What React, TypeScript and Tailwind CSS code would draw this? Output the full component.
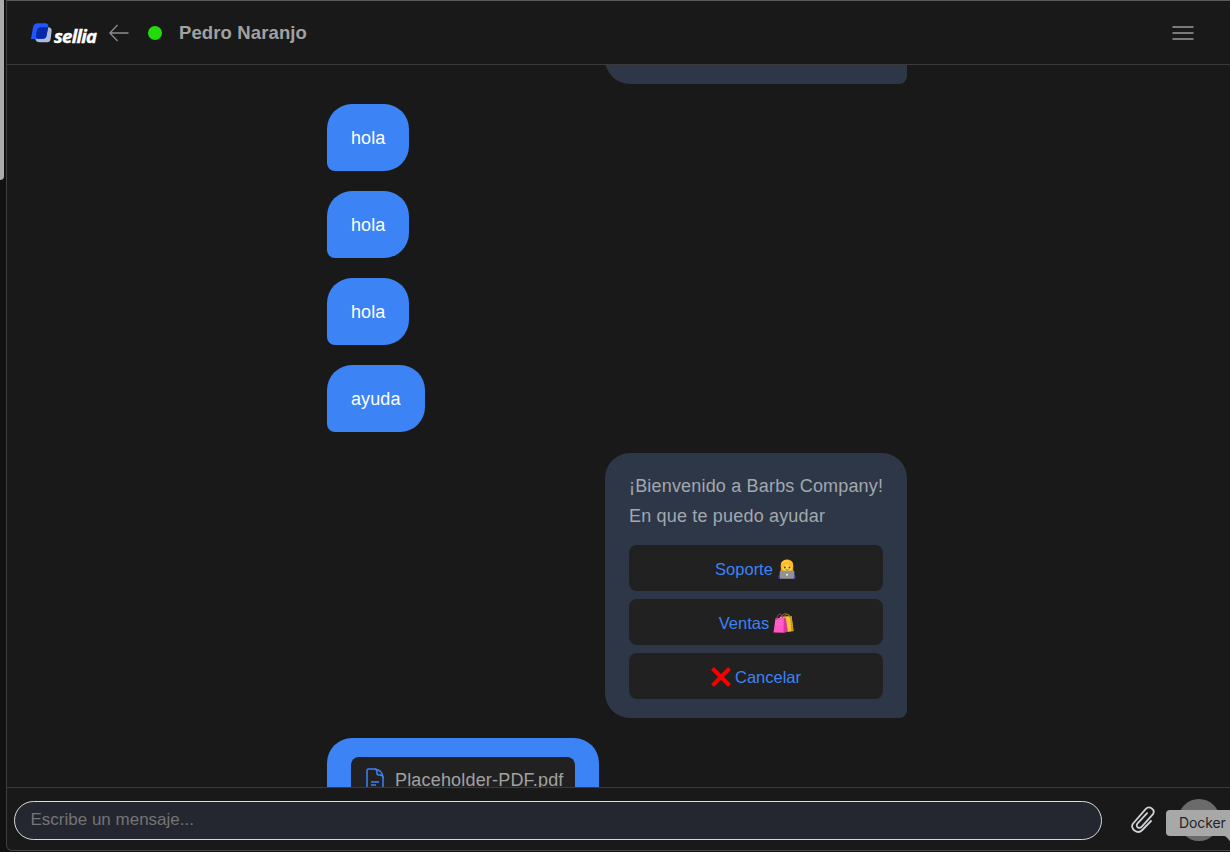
import type { ReactNode } from "react";

function Logo() {
  return (
    <div className="flex h-[24px] w-[68px] shrink-0 items-center">
      <svg width="22" height="22" viewBox="0 0 22 22" className="mt-[2px] shrink-0">
        <path d="M9 4.300h8q4 0 3.600 4l-1 8q-.5 3-3.500 3H9q-4 0-4.800-3.500l1.500-8Q6.200 4.300 9 4.300z" fill="#b1bad4" />
        <path d="M6.800.3h7.500q3.500 0 2.900 3.500l-1.800 9.200q-.5 3-4 3H0L2 4.500Q2.800.3 6.800.3z" fill="#2157ff" />
        <path d="M10 4.200h7.200l-1.700 8.800q-.5 2.800-4 2.800H8q-3.500 0-3-3.500l.7-4.300Q6.500 4.200 10 4.200z" fill="#0527a8" />
      </svg>
      <span className="mt-[7px] ml-[1px] font-['Open_Sans',sans-serif] text-[18.500px] leading-none font-bold tracking-[-0.7px] text-white italic [-webkit-text-stroke:0.4px_white]">
        sellia
      </span>
    </div>
  );
}

function SupportEmoji() {
  return (
    <svg width="18" height="20" viewBox="0 0 18 20" className="mx-px shrink-0">
      <path d="M2.800 14V7.500C2.300 3 5 .8 9 .8s6.700 2.200 6.200 6.700V14z" fill="#f0a51b" />
      <path d="M0 19.500q.2-5 3.500-5.500h11q3.200.5 3.500 5.500z" fill="#3433bb" />
      <ellipse cx="9.200" cy="8" rx="5" ry="5" fill="#ffd84a" />
      <path d="M3 9.500c2.500-.8 4.300-2.500 5-5.300C9.500 6.500 12.500 7.500 15.200 8.500 15.500 3 13 .8 9 .8S2.500 3 3 9.500z" fill="#ffb929" />
      <path d="M4.500 3.800Q7 1.300 10 2.300" stroke="#ffe17a" strokeWidth=".9" fill="none" />
      <circle cx="6.900" cy="8.500" r=".9" fill="#5c3c18" />
      <circle cx="11.500" cy="8.500" r=".9" fill="#5c3c18" />
      <path d="M7.500 10.500q1.700 1.100 3.400 0" stroke="#b84b22" strokeWidth=".8" fill="none" />
      <rect x="1.800" y="11.700" width="14.500" height="8" rx=".8" fill="#929292" />
      <circle cx="9" cy="15.800" r="1" fill="#f2f2f2" />
    </svg>
  );
}

function BagsEmoji() {
  return (
    <svg width="21" height="20" viewBox="0 0 21 20" className="-mr-px shrink-0">
      <path d="M6.500 3.800 18.500 3 20.500 18l-6 1z" fill="#f3c52f" />
      <path d="M17 3.200l1.500-.2 2 15-2.200.3z" fill="#c99513" />
      <path d="M9 4.500C9-.5 15.500-.5 16.500 4.500M11.500 4c.5-3.500 5-3.500 6 0" stroke="#a17829" fill="none" strokeWidth="1" />
      <path d="M2.500 5.200 11 4.700 11.500 19.700.5 19.500z" fill="#ff58c4" />
      <path d="M11 4.700l1.700-.2L15 18.700l-4.500 1 .2-8z" fill="#d9369e" />
      <path d="M3.800 7C4-.5 9-.5 9.800 5" stroke="#a44880" fill="none" strokeWidth="1" />
      <path d="M2 8h8M1.500 11h8M15 7h4M15.500 10h4M16 13h4" stroke="#ffffff" strokeOpacity=".2" strokeWidth=".7" />
    </svg>
  );
}

function CrossEmoji() {
  return (
    <svg width="20" height="20" viewBox="0 0 20 20" className="shrink-0">
      <path d="M1.500 1.500 18.500 18.500M18.500 1.500 1.500 18.500" stroke="#f60000" strokeWidth="4" />
    </svg>
  );
}

function UserBubble({ children }: { children: ReactNode }) {
  return (
    <div className="flex h-[67px] items-center self-start rounded-[25px] rounded-bl-[8px] bg-[#3c83f6] px-6 pt-[2px] text-[18px] tracking-[0.1px] text-white">
      {children}
    </div>
  );
}

function Option({ children }: { children: ReactNode }) {
  return (
    <button className="flex h-[46px] w-full items-center justify-center gap-1 rounded-lg bg-[#212121] pt-[2px] text-[16.500px] text-[#3c83f6]">
      {children}
    </button>
  );
}

export default function App() {
  return (
    <div className="flex h-[852px] w-[1230px] overflow-hidden bg-[#111111] font-['Liberation_Sans',Arial,sans-serif] text-[#a1a1a1]">
      <div className="w-[6px] shrink-0">
        <div className="h-[180px] w-[4px] rounded-br-[4px] bg-[#a9abac]" />
      </div>
      <div className="flex h-[851px] min-w-0 flex-1 flex-col rounded-bl-[6px] border-t border-b border-l border-t-[#5b5b5b] border-b-[#484445] border-l-[#404040] bg-[#191919]">
        <header className="flex h-[64px] shrink-0 items-center border-b border-[#3a3a3a] pr-[36px] pl-[24px]">
          <Logo />
          <svg width="20" height="18" viewBox="0 0 20 18" className="ml-[10px] shrink-0" fill="none" stroke="#8d8d8d" strokeWidth="1.300">
            <path d="M19.500 9H1M8.500 1 .8 9l7.700 8" />
          </svg>
          <span className="ml-[19px] size-[14px] rounded-full bg-[#22db08]" />
          <h1 className="mt-[1px] ml-[17px] text-[18.500px] font-bold tracking-[0.12px]">Pedro Naranjo</h1>
          <svg width="22" height="16" viewBox="0 0 22 16" className="ml-auto" stroke="#9b9d9b" strokeWidth="1.600">
            <path d="M.5 2H21.500M.5 8H21.500M.5 14H21.500" />
          </svg>
        </header>
        <main className="min-h-0 flex-1 overflow-hidden">
          <div className="ml-[320px] flex w-[580px] flex-col gap-5">
            <div className="-mt-[81px] h-[100px] w-[302px] shrink-0 self-end rounded-[25px] rounded-br-[8px] bg-[#2e3748]" />
            <UserBubble>hola</UserBubble>
            <UserBubble>hola</UserBubble>
            <UserBubble>hola</UserBubble>
            <UserBubble>ayuda</UserBubble>
            <section className="mt-px h-[265px] w-[302px] self-end rounded-[25px] rounded-br-[8px] bg-[#2e3748] px-6 pt-[18px]">
              <p className="text-[18px] leading-[30px] tracking-[0.18px] whitespace-nowrap text-[#a3a8ae]">
                ¡Bienvenido a Barbs Company!
                <br />
                En que te puedo ayudar
              </p>
              <div className="mt-[14px] flex flex-col gap-2">
                <Option><span className="pt-px">Soporte</span> <SupportEmoji /></Option>
                <Option><span className="pt-px">Ventas</span> <BagsEmoji /></Option>
                <Option><CrossEmoji /> <span className="pt-px">Cancelar</span></Option>
              </div>
            </section>
            <section className="h-[100px] w-[272px] self-start rounded-t-[25px] bg-[#3c83f6] px-6 pt-[19px]">
              <div className="flex h-[46px] items-center rounded-lg bg-[#212121] pl-[15px] text-[18px] tracking-[0.18px]">
                <svg width="18" height="22" viewBox="0 0 18 22" className="-mt-[2px] shrink-0" fill="none" stroke="#3c83f6" strokeWidth="1.500">
                  <path d="M2.500 1H9q8 1.500 8 9v9q0 2-2 2H2.500Q1 21 1 19.500v-17Q1 1 2.500 1z" />
                  <path d="M9 1q2 .5 2 3v1.500q0 1.500 1.500 1.500H14q3 0 3 3M5 14h8M5 17h5" />
                </svg>
                <span className="ml-[11px] whitespace-nowrap">Placeholder-PDF.pdf</span>
              </div>
            </section>
          </div>
        </main>
        <footer className="relative flex h-[63px] shrink-0 items-start border-t border-[#3a3a3a] pt-[13px] pl-[7px]">
          <input
            aria-label="Mensaje"
            placeholder="Escribe un mensaje..."
            className="h-[39px] w-[1088px] shrink-0 rounded-full border border-[#d9dadd] bg-[#242730] pr-4 pb-[2px] pl-[15.500px] text-[17px] text-[#c0c0c0] placeholder:text-[#747474]"
          />
          <svg width="26" height="28" viewBox="0 0 26 28" className="mt-[5px] ml-[28px] shrink-0" fill="none" stroke="#cfd2d5" strokeWidth="1.800" strokeLinecap="round" strokeLinejoin="round">
            <path d="m21 15-8.700 9c-4.800 5-13-1.500-9.200-6.500L15.600 3.200c3.600-4.200 10.500.4 7.200 5.200L11.600 20.800c-2.700 3-6.600-.7-4-3.500l9.500-10.100" />
          </svg>
          <div className="absolute top-[11px] left-[1171px] size-[42px] rounded-full bg-[#6b6b6b]" />
          <div className="absolute top-[22px] left-[1159px] h-[26px] w-[72px] rounded-[4px] bg-[#a8a8a8] pl-[13px] font-['Inter',sans-serif] text-[14px] leading-[26px] tracking-[-0.1px] whitespace-nowrap text-[#242424]">
            Docker
            <svg width="9" height="9" viewBox="0 0 9 9" className="absolute top-[26px] left-[58px]">
              <path d="M0 0H9V9L5 4Q2 0 0 0z" fill="#a8a8a8" />
            </svg>
          </div>
        </footer>
      </div>
    </div>
  );
}
